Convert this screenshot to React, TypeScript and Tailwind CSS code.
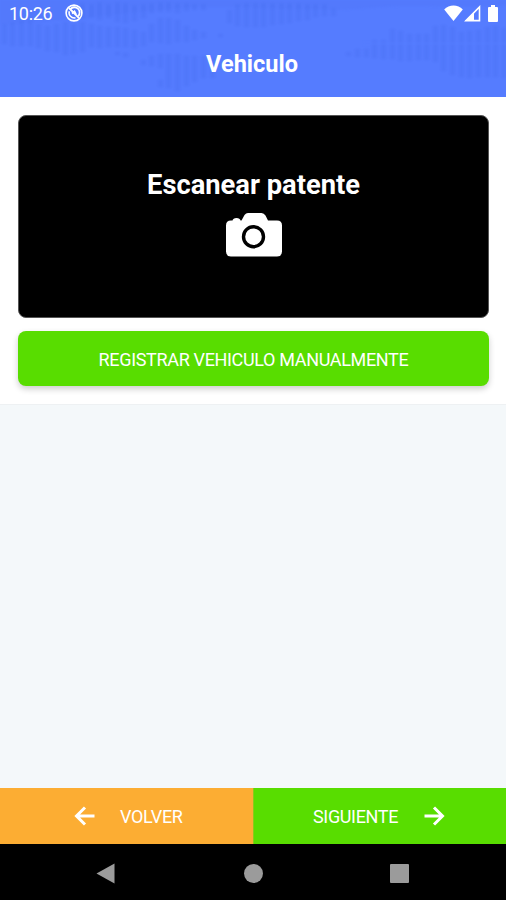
import type { ReactNode } from 'react';

// [x, top, height] of every bar in the header's sound wave
const waveBars: number[][] = [
  [2, 24, 20], [10, 22, 24], [19, 20, 26], [28, 20, 26], [36, 24, 24], [45, 26, 25], [54, 24, 28], [63, 22, 33],
  [71, 24, 30], [80, 22, 30], [89, 24, 23], [97, 26, 22], [106, 27, 20], [115, 27, 20], [123, 28, 19], [132, 30, 18],
  [141, 32, 14], [149, 24, 18], [158, 18, 25], [166, 18, 26], [175, 20, 22], [184, 26, 16], [192, 30, 10], [201, 32, 6],
  [80, 3, 16], [89, 4, 14], [97, 2, 18], [106, 4, 14], [115, 2, 20], [123, 3, 20], [132, 5, 16], [141, 4, 14],
  [149, 3, 10], [158, 2, 10], [166, 2, 10], [175, 3, 10], [184, 3, 8], [192, 4, 6], [201, 4, 6],
  [115, 52, 3], [123, 53, 4], [141, 60, 5], [149, 56, 10], [158, 54, 14], [166, 54, 34], [175, 54, 37],
  [158, 80, 7], [184, 56, 30], [192, 56, 26], [201, 56, 22], [210, 58, 20],
  [218, 34, 3], [227, 10, 13], [235, 4, 22], [244, 3, 24], [253, 3, 24], [261, 3, 24], [270, 3, 22], [279, 3, 21],
  [287, 3, 20], [296, 3, 18], [305, 4, 16], [313, 4, 13], [322, 4, 12], [331, 8, 8],
  [346, 52, 4], [355, 49, 8], [364, 49, 8], [372, 40, 18], [381, 40, 19], [390, 29, 30], [398, 31, 30], [407, 34, 27],
  [416, 34, 26], [424, 34, 26], [433, 26, 36], [441, 25, 46], [450, 27, 48], [459, 32, 45], [467, 31, 47],
  [476, 30, 47], [485, 27, 50], [493, 26, 51], [502, 28, 50],
];

function HeaderWave() {
  return (
    <svg className="absolute inset-0 h-full w-full blur-[0.8px]" viewBox="0 0 506 97" preserveAspectRatio="none">
      <g fill="#4a70f2" opacity="0.36">
        {waveBars.map(([x, y, h]) => (
          <rect key={`${x}-${y}`} x={x} y={y} width="5" height={h} rx="1" />
        ))}
      </g>
      <path d="M0 0h506v5c-60 4-90-2-140 3S230 4 180 8 60 22 0 25z" fill="#4a70f2" opacity="0.2" />
      <path d="M364 43.500h142" stroke="#557cff" strokeWidth="2" />
    </svg>
  );
}

function StatusBar() {
  return (
    <div className="relative flex h-[26px] items-center justify-between pl-[9px] pr-[8px] text-white">
      <div className="flex items-center gap-[13px]">
        <span className="pt-px text-[18px] leading-[26px] tracking-[-0.3px]">10:26</span>
        <svg className="h-[18px] w-[18px]" viewBox="0 0 18 18">
          <circle cx="9" cy="9" r="7.900" fill="none" stroke="currentColor" strokeWidth="1.600" />
          <path d="M5.500 5a5.200 5.200 0 0 1 7.800 7" fill="none" stroke="currentColor" strokeWidth="1.800" />
          <path d="M4.300 7.200a5.200 5.200 0 0 0 6.200 6.600" fill="none" stroke="currentColor" strokeWidth="1.500" />
          <path d="M4 4l10 10M7 9.500L9.500 7.500l1.500 3" fill="none" stroke="currentColor" strokeWidth="1.800" />
        </svg>
      </div>
      <div className="flex items-center">
        <svg className="h-[17px] w-[19px]" viewBox="0 0 19 17">
          <path d="M.2 4.500C5-.8 14-.8 18.800 4.500L9.500 16z" fill="currentColor" />
        </svg>
        <svg className="ml-[1px] h-[17px] w-[17px]" viewBox="0 0 17 17">
          <path d="M2 15.600L15.500 2v13.600z" fill="none" stroke="currentColor" strokeWidth="1.600" />
          <path d="M1.200 16l8.800-8.800V16z" fill="currentColor" />
        </svg>
        <svg className="ml-[7px] h-[17px] w-[10px]" viewBox="0 0 10 17">
          <path d="M3 0h4v2h2q1 0 1 1v13q0 1-1 1H1q-1 0-1-1V3q0-1 1-1h2z" fill="currentColor" />
        </svg>
      </div>
    </div>
  );
}

function Arrow({ className }: { className: string }) {
  return (
    <svg className={className} viewBox="0 0 22 20" fill="none" stroke="currentColor" strokeWidth="3">
      <path d="M20.500 10H2.500M11 1.500L2.500 10l8.500 8.500" />
    </svg>
  );
}

function FooterButton({ className, children }: { className: string; children: ReactNode }) {
  return (
    <button className={`flex h-14 w-1/2 items-center text-[18px] tracking-[-0.35px] text-white ${className}`}>
      {children}
    </button>
  );
}

export default function App() {
  return (
    <div className="flex h-screen w-full flex-col bg-[#f4f8fa] font-[Roboto,sans-serif]">
      {/* Header */}
      <header className="relative h-[97px] shrink-0 overflow-hidden bg-[#557cff]">
        <HeaderWave />
        <StatusBar />
        <h1 className="relative pr-[2px] pt-[21px] text-center text-[23.500px] font-bold leading-[34px] text-white">
          Vehiculo
        </h1>
      </header>

      {/* Vehicle options */}
      <section className="flex h-[308px] shrink-0 flex-col border-b border-[#eef1f3] bg-white pl-[18px] pr-[17px] pt-[18px]">
        <button className="flex h-[203px] flex-col items-center rounded-lg border border-[#555] bg-black pt-[51px] text-white">
          <span className="text-[27.300px] font-bold leading-9">Escanear patente</span>
          <svg className="mt-[9px] h-[46px] w-[58px]" viewBox="0 0 58 46">
            <path
              d="M6 8.500h1.500Q8 6 11.500 6T15.500 8.500h1L19.500 3Q21 1 23 1H36.500Q39 1 40.500 3.500L43 8.500H52Q57 8.500 57 13.500V39.500Q57 44.500 52 44.500H6Q1 44.500 1 39.500V13.500Q1 8.500 6 8.500z"
              fill="currentColor"
            />
            <circle cx="28.500" cy="24.700" r="10" fill="none" stroke="#000" strokeWidth="3.400" />
          </svg>
        </button>
        <button className="mt-[13px] h-[55px] rounded-lg bg-[#58dd00] pt-[2px] text-[18px] tracking-[-0.34px] text-white shadow-[0_3px_6px_rgba(0,0,0,0.2)]">
          REGISTRAR VEHICULO MANUALMENTE
        </button>
      </section>

      <main className="flex-1" />

      {/* Step navigation */}
      <div className="flex shrink-0">
        <FooterButton className="bg-[#fcad33] pl-[74px]">
          <Arrow className="mr-[24px] h-5 w-[22px]" />
          <span className="pt-px">VOLVER</span>
        </FooterButton>
        <FooterButton className="border-l border-[#8ac91b] bg-[#58dd00] pl-[59px]">
          <span className="pt-px">SIGUIENTE</span>
          <Arrow className="ml-[25px] h-5 w-[22px] rotate-180" />
        </FooterButton>
      </div>

      {/* Android navigation bar */}
      <nav className="flex h-14 shrink-0 items-center bg-black pl-[96px] pt-[3px] text-[#9b9b9b]">
        <svg className="h-[21px] w-[19px]" viewBox="0 0 19 21">
          <path d="M.5 10.500L18.500 .5v20z" fill="currentColor" />
        </svg>
        <span className="ml-[129px] h-[19px] w-[19px] rounded-full bg-[#9b9b9b]" />
        <span className="ml-[127px] h-[19px] w-[19px] rounded-[1px] bg-[#9b9b9b]" />
      </nav>
    </div>
  );
}
